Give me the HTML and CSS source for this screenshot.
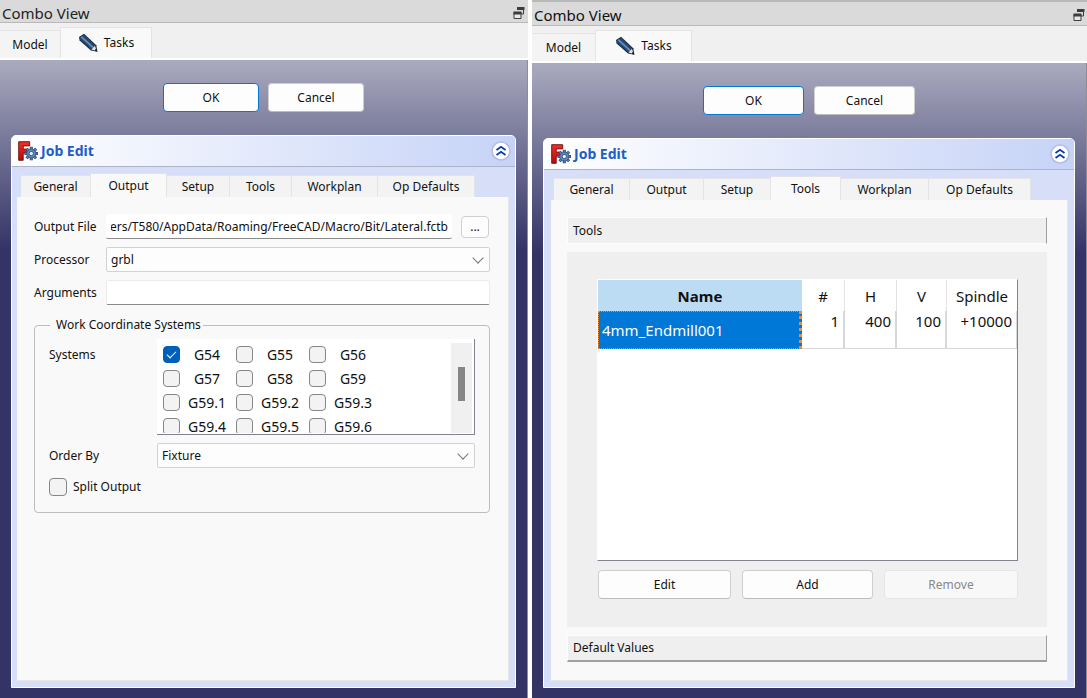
FILE: index.html
```html
<!DOCTYPE html>
<html lang="en">
<head>
<meta charset="utf-8">
<title>Combo View</title>
<link rel="stylesheet" href="styles.css">
</head>
<body>
<svg class="defs" width="0" height="0" aria-hidden="true">
  <defs>
    <linearGradient id="red" x1="0" y1="0" x2="0" y2="1"><stop offset="0" stop-color="#f03028"/><stop offset="1" stop-color="#b80c0c"/></linearGradient>
  </defs>
  <symbol id="pencil" viewBox="0 0 20 20">
    <path d="M1 4 6 .8 18.3 12.2 19.4 18.8 13 17.6 1.6 7.4Z" fill="#16283f"/>
    <path d="M2 4.4 5.8 2 17 12.4 13.2 16.4 2.4 6.8Z" fill="#305787"/>
    <path d="M3.4 3.8 15.2 14.6" stroke="#6f9ccb" stroke-width="1.2"/>
    <path d="M5 2.9 16.6 13.4M2.5 6 13.6 16" stroke="#1d3b61" stroke-width=".9"/>
    <path d="M13.4 16.6 17 12.8 18.6 18Z" fill="#e6e3dc"/>
    <path d="M16.6 17.4 18.1 15.6 19.4 18.8Z" fill="#111"/>
  </symbol>
  <symbol id="float" viewBox="0 0 12 12">
    <path d="M4.500 1.500h6v5.500H8.500" fill="none" stroke="#3c3c3c"/>
    <path d="M4 0h7.500v3H4z" fill="#3c3c3c"/>
    <path d="M1 5.500h7v6H1z" fill="#e8e8e8" stroke="#3c3c3c"/>
    <path d="M.5 4.500h8v3h-8z" fill="#3c3c3c"/>
  </symbol>
  <symbol id="job" viewBox="0 0 20 20">
    <path d="M.7.7h11v4.200H5.200v3.200h4.600v4H5.200v7.200H.7Z" fill="url(#red)" stroke="#6d0a0a" stroke-width=".9"/>
    <g stroke="#28466f" stroke-width="3"><path d="M13.300 5.700v13.600M6.500 12.500h13.600M8.500 7.700l9.600 9.600M18.100 7.700l-9.600 9.600"/></g>
    <g stroke="#5f87bb" stroke-width="1.500"><path d="M13.300 6.300v12.400M7.100 12.500h12.400M8.900 8.100l8.800 8.800M17.700 8.100l-8.800 8.800"/></g>
    <circle cx="13.300" cy="12.500" r="4.600" fill="#5f87bb" stroke="#28466f" stroke-width=".7"/>
    <circle cx="13.300" cy="12.500" r="2.100" fill="#eef3fd" stroke="#28466f" stroke-width=".8"/>
  </symbol>
  <symbol id="collapse" viewBox="0 0 20 20">
    <circle cx="10" cy="10" r="9" fill="#fff" stroke="#b3bde0" stroke-width="1.600"/>
    <path d="M5.500 9 10 5.800 14.500 9M5.500 14 10 10.800 14.500 14" fill="none" stroke="#0b3ba8" stroke-width="1.800"/>
  </symbol>
</svg>
<main class="workspace">
  <section class="dock dock-output">
    <header class="dock-title"><h1>Combo View</h1><button class="icon-button" aria-label="Float panel"><svg class="float-icon"><use href="#float"/></svg></button></header>
    <nav class="dock-tabs"><button class="dock-tab">Model</button><button class="dock-tab active"><svg class="pencil-icon"><use href="#pencil"/></svg>Tasks</button></nav>
    <div class="task-area">
      <div class="dialog-buttons"><button class="button primary">OK</button><button class="button">Cancel</button></div>
      <article class="panel">
        <header class="panel-head"><svg class="job-icon"><use href="#job"/></svg><h2>Job Edit</h2><button class="icon-button" aria-label="Collapse"><svg class="collapse-icon"><use href="#collapse"/></svg></button></header>
        <div class="panel-body">
          <nav class="tabs"><button class="tab">General</button><button class="tab active">Output</button><button class="tab">Setup</button><button class="tab">Tools</button><button class="tab">Workplan</button><button class="tab">Op Defaults</button></nav>
          <form class="page output-page">
            <div class="fields">
              <label for="file">Output File</label>
              <div class="file-row"><input class="text path" id="file" value="C:/Users/T580/AppData/Roaming/FreeCAD/Macro/Bit/Lateral.fctb"><button type="button" class="browse">...</button></div>
              <label for="processor">Processor</label>
              <div class="select-wrap"><select id="processor"><option>grbl</option></select></div>
              <label for="arguments">Arguments</label>
              <input class="text" id="arguments">
            </div>
            <fieldset class="group">
              <legend>Work Coordinate Systems</legend>
              <div class="group-grid">
                <span class="systems-label">Systems</span>
                <div class="systems">
                  <div class="systems-list">
                    <label><input type="checkbox" checked><span>G54</span></label><label><input type="checkbox"><span>G55</span></label><label><input type="checkbox"><span>G56</span></label>
                    <label><input type="checkbox"><span>G57</span></label><label><input type="checkbox"><span>G58</span></label><label><input type="checkbox"><span>G59</span></label>
                    <label><input type="checkbox"><span>G59.1</span></label><label><input type="checkbox"><span>G59.2</span></label><label><input type="checkbox"><span>G59.3</span></label>
                    <label><input type="checkbox"><span>G59.4</span></label><label><input type="checkbox"><span>G59.5</span></label><label><input type="checkbox"><span>G59.6</span></label>
                  </div>
                  <div class="scrollbar"><div class="thumb"></div></div>
                </div>
                <label for="order">Order By</label>
                <div class="select-wrap"><select id="order"><option>Fixture</option></select></div>
                <label class="split"><input type="checkbox">Split Output</label>
              </div>
            </fieldset>
          </form>
        </div>
      </article>
    </div>
  </section>
  <section class="dock dock-tools">
    <header class="dock-title"><h1>Combo View</h1><button class="icon-button" aria-label="Float panel"><svg class="float-icon"><use href="#float"/></svg></button></header>
    <nav class="dock-tabs"><button class="dock-tab">Model</button><button class="dock-tab active"><svg class="pencil-icon"><use href="#pencil"/></svg>Tasks</button></nav>
    <div class="task-area">
      <div class="dialog-buttons"><button class="button primary">OK</button><button class="button">Cancel</button></div>
      <article class="panel">
        <header class="panel-head"><svg class="job-icon"><use href="#job"/></svg><h2>Job Edit</h2><button class="icon-button" aria-label="Collapse"><svg class="collapse-icon"><use href="#collapse"/></svg></button></header>
        <div class="panel-body">
          <nav class="tabs"><button class="tab">General</button><button class="tab">Output</button><button class="tab">Setup</button><button class="tab active">Tools</button><button class="tab">Workplan</button><button class="tab">Op Defaults</button></nav>
          <div class="page tools-page">
            <button class="toolbox">Tools</button>
            <div class="toolbox-content">
              <div class="table-frame">
                <table>
                  <colgroup><col class="c-name"><col class="c-num"><col class="c-h"><col class="c-v"><col class="c-spindle"></colgroup>
                  <thead><tr><th class="sorted">Name</th><th>#</th><th>H</th><th>V</th><th>Spindle</th></tr></thead>
                  <tbody><tr><td class="selected">4mm_Endmill001</td><td>1</td><td>400</td><td>100</td><td>+10000</td></tr></tbody>
                </table>
              </div>
              <div class="actions"><button class="button">Edit</button><button class="button">Add</button><button class="button" disabled>Remove</button></div>
            </div>
            <button class="toolbox closed">Default Values</button>
          </div>
        </div>
      </article>
    </div>
  </section>
</main>
</body>
</html>
```
FILE: styles.css
```css
* { box-sizing: border-box; }
body { margin: 0; background: #fff; color: #111; font: 12px/16px "Noto Sans", "Open Sans", sans-serif; }
button, input, select { font: inherit; color: inherit; margin: 0; }
button { padding: 0; }
h1, h2 { margin: 0; }
.defs { position: absolute; }

.workspace { display: grid; grid-template-columns: 528fr 555fr; gap: 4px; min-height: 100vh; }
.dock { display: flex; flex-direction: column; min-width: 0; background: #f0f0f0; }
.dock-title { display: flex; align-items: center; justify-content: space-between; height: 23px; padding: 3px 3px 0 2px; background: #dadada; border-bottom: 1px solid #b9b9b9; }
.dock-title h1 { font-size: 15px; line-height: 20px; font-weight: 400; color: #222; }
.dock-tools .dock-title { height: 26px; border-top: 2px solid #b9b9b9; padding-right: 2px; }
.dock-tools .dock-title h1 { color: #111; }
.icon-button { display: flex; border: 0; background: none; }
.float-icon { width: 12px; height: 12px; }
.dock-tabs { display: flex; align-items: flex-end; height: 37px; border-bottom: 2px solid #fff; }
.dock-tab { display: flex; align-items: center; justify-content: center; gap: 6px; width: 60px; height: 28px; border: 1px solid #e4e4e4; border-width: 1px 0 0; background: #f4f4f4; }
.dock-tab.active { width: 92px; height: 31px; border-width: 1px 1px 0; background: #f9f9f9; }
.dock-tools .dock-tab { width: 63px; }
.dock-tools .dock-tab.active { width: 97px; }
.pencil-icon { width: 20px; height: 20px; }

.task-area { flex: 1; display: flex; flex-direction: column; padding: 23px 11px 10px; border-right: 1px solid #8c8c9c; background: linear-gradient(#aaaabf, #333366 190px); }
.dialog-buttons { display: flex; justify-content: center; gap: 9px; margin-bottom: 23px; }
.button { height: 29px; border: 1px solid #cfcfcf; border-bottom-color: #bcbcbc; border-radius: 4px; background: #fdfdfd; }
.button.primary { border-color: #0078d4; }
.button:disabled { color: #888; background: #f8f8f8; border-color: #e6e6e6; }
.dialog-buttons .button { width: 96px; }
.dock-tools .dialog-buttons { gap: 10px; }
.dock-tools .dialog-buttons .button { width: 101px; }

.panel { flex: 1; display: flex; flex-direction: column; border: 1px solid #fff; border-radius: 5px 5px 0 0; background: #d6def8; }
.panel-head { display: flex; align-items: center; height: 31px; padding: 0 4px 0 6px; border-bottom: 1px solid #adb4c8; border-radius: 4px 4px 0 0; background: linear-gradient(90deg, #fff, #c6d3f7); }
.panel-head h2 { flex: 1; padding-left: 3px; font-size: 14px; line-height: 18px; font-weight: 700; color: #215dc6; }
.dock-tools .panel-head { padding-left: 7px; }
.job-icon, .collapse-icon { width: 20px; height: 20px; }
.panel-body { flex: 1; display: flex; flex-direction: column; padding: 6px 6px 6px 5px; }
.dock-tools .panel-body { padding-left: 7px; }
.tabs { display: grid; grid-template-columns: 70px 76px 63px 62px 86px 97px; align-items: end; height: 24px; padding-left: 4px; }
.dock-tools .tabs { grid-template-columns: 76px 74px 67px 70px 88px 102px; padding-left: 3px; }
.tab { height: 22px; border: 1px solid #e3e3e8; border-width: 1px 1px 0 0; background: #f3f3f3; }
.tab.active { height: 24px; background: #f9f9f9; }
.page { flex: 1; border: 1px solid #e6e6e6; border-top-color: #f9f9f9; border-left-color: #f9f9f9; background: #f9f9f9; }
.tools-page { display: flex; flex-direction: column; padding: 16px 20px 18px 15px; }
.output-page { padding: 16px 18px 18px 16px; }

.fields { display: grid; grid-template-columns: 72px 1fr; align-items: center; row-gap: 8px; }
.file-row { display: flex; align-items: center; gap: 9px; padding-right: 1px; }
.text { width: 100%; min-width: 0; height: 25px; padding: 0 5px; border: 1px solid #ececec; border-bottom-color: #8a8a8a; border-radius: 2px; background: #fff; }
.path { flex: 1; direction: rtl; text-align: right; padding: 0 4px 0 5px; border-width: 0 0 1px; }
.browse { width: 28px; height: 22px; border: 1px solid #d0d0d0; border-radius: 4px; background: #fdfdfd; line-height: 14px; }
.select-wrap { display: grid; align-items: center; }
.select-wrap select { grid-area: 1 / 1; width: 100%; height: 25px; padding: 0 4px; appearance: none; border: 1px solid #d2d2d2; border-radius: 2px; background: #fdfdfd; }
.select-wrap::after { content: ""; grid-area: 1 / 1; justify-self: end; width: 7px; height: 7px; margin: 0 8px 4px 0; border: solid #777; border-width: 0 1px 1px 0; transform: rotate(45deg); pointer-events: none; }

.group { margin: 12px 0 0; padding: 6px 14px 16px; border: 1px solid #bdbdbd; border-radius: 4px; min-width: 0; }
.group legend { margin-left: 1px; padding: 0 2px 0 6px; }
.group-grid { display: grid; grid-template-columns: 108px 1fr; row-gap: 8px; align-items: center; }
.systems-label { align-self: start; padding-top: 8px; }
.systems { display: flex; height: 96px; padding: 4px 2px 1px 6px; border-right: 1px solid #83838f; border-bottom: 1px solid #83838f; background: #fff; overflow: hidden; }
.systems-list { flex: 1; display: grid; grid-template-columns: repeat(3, 73px); grid-auto-rows: 23px; row-gap: 1px; overflow: hidden; }
.systems-list label { display: flex; align-items: center; font-size: 14px; line-height: 20px; }
.systems-list span { width: 54px; text-align: center; }
input[type="checkbox"] { appearance: none; flex: none; width: 17px; height: 17px; border: 1px solid #868686; border-radius: 4px; background: #f3f3f3; }
input[type="checkbox"]:checked { display: grid; place-items: center; border-color: #005fb8; background: #005fb8; }
input[type="checkbox"]:checked::after { content: ""; width: 8px; height: 4px; margin-bottom: 3px; border: solid #fff; border-width: 0 0 1px 1px; transform: rotate(-45deg); }
.scrollbar { width: 21px; padding: 24px 7px 0; background: #f0f0f0; }
.thumb { height: 34px; background: #868686; }
.split { grid-column: 1 / -1; display: flex; align-items: center; gap: 6px; padding-top: 2px; }
.split input[type="checkbox"] { width: 18px; height: 18px; }

.toolbox { height: 27px; padding: 0 5px; text-align: left; border: 1px solid #fdfdfd; border-right-color: #9f9f9f; background: #efefef; }
.toolbox.closed { border-bottom: 2px solid #a0a0a0; }
.toolbox-content { flex: 1; display: flex; flex-direction: column; margin: 8px 0; padding: 27px 29px 28px 30px; background: #efefef; }
.table-frame { flex: 1; border: 1px solid #fff; border-right-color: #83838f; border-bottom-color: #83838f; background: #fff; }
table { width: 100%; table-layout: fixed; border-collapse: separate; border-spacing: 0; font-size: 15px; line-height: 20px; }
.c-name { width: 204px; } .c-num { width: 43px; } .c-h { width: 52px; } .c-v { width: 50px; }
th { height: 31px; padding: 0; border-right: 1px solid #e3e3e3; font-weight: 400; }
th.sorted { background: #bcdcf4; border-right: 0; font-weight: 700; }
td { height: 38px; padding: 0 4px; vertical-align: top; text-align: right; border-right: 2px solid #d8d8d8; border-bottom: 1px solid #d8d8d8; }
th:last-child { border-right: 0; }
td:last-child { border-right-width: 1px; }
td.selected { padding: 0 3px; vertical-align: middle; text-align: left; color: #fff; background: #0078d7; border: 1px dotted #f08a35; border-right: 3px dotted #f08a35; }
.actions { display: grid; grid-template-columns: 133fr 131fr 134fr; gap: 11px; margin-top: 9px; padding-left: 1px; }
```
